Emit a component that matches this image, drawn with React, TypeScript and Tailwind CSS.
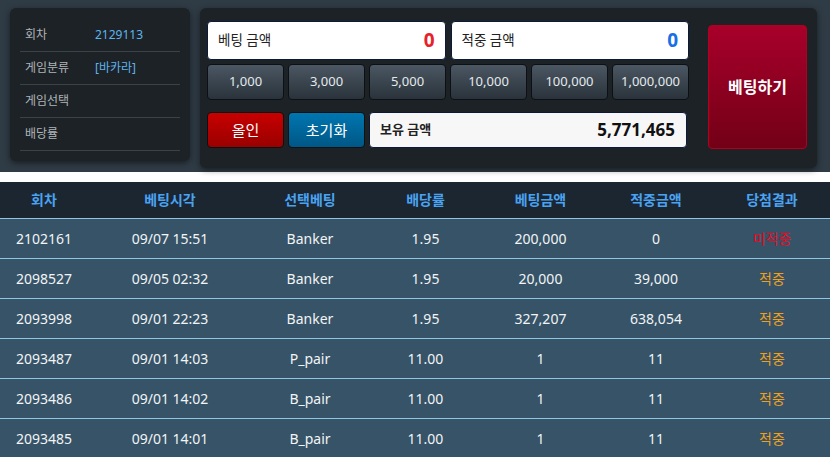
import React from 'react'

// Baccarat betting panel + bet history table

const FONT = { fontFamily: '"Noto Sans", "Noto Sans CJK KR", sans-serif' }

const info = [
  { label: '회차', value: '2129113' },
  { label: '게임분류', value: '[바카라]' },
  { label: '게임선택', value: '' },
  { label: '배당률', value: '' },
]

const chips = ['1,000', '3,000', '5,000', '10,000', '100,000', '1,000,000']

type Row = {
  round: string
  time: string
  pick: string
  odds: string
  bet: string
  win: string
  result: '적중' | '미적중'
}

const rows: Row[] = [
  { round: '2102161', time: '09/07 15:51', pick: 'Banker', odds: '1.95', bet: '200,000', win: '0', result: '미적중' },
  { round: '2098527', time: '09/05 02:32', pick: 'Banker', odds: '1.95', bet: '20,000', win: '39,000', result: '적중' },
  { round: '2093998', time: '09/01 22:23', pick: 'Banker', odds: '1.95', bet: '327,207', win: '638,054', result: '적중' },
  { round: '2093487', time: '09/01 14:03', pick: 'P_pair', odds: '11.00', bet: '1', win: '11', result: '적중' },
  { round: '2093486', time: '09/01 14:02', pick: 'B_pair', odds: '11.00', bet: '1', win: '11', result: '적중' },
  { round: '2093485', time: '09/01 14:01', pick: 'B_pair', odds: '11.00', bet: '1', win: '11', result: '적중' },
]

const headers = ['회차', '베팅시각', '선택베팅', '배당률', '베팅금액', '적중금액', '당첨결과']
const colWidths = ['w-[88px]', 'w-[164px]', 'w-[116px]', 'w-[115px]', 'w-[115px]', 'w-[116px]', 'w-[116px]']

function InfoPanel() {
  return (
    <div className="w-[180px] h-[153px] rounded-md bg-[#1d2226] shadow-[0_2px_6px_rgba(0,0,0,0.5)] px-[10px] pt-[11px]">
      {info.map((r) => (
        <div key={r.label} className="h-[33px] flex items-center border-b border-[#3b4349] pl-[5px] text-[12px]">
          <span className="w-[70px] text-[#aeb4b8]">{r.label}</span>
          <span className="text-[#5fb4ee]">{r.value}</span>
        </div>
      ))}
    </div>
  )
}

function AmountBox({ label, value, color }: { label: string; value: string; color: string }) {
  return (
    <div className="flex-1 h-[39px] rounded-[4px] bg-white border border-[#0b1a3a] flex items-center justify-between pl-[10px] pr-[10px]">
      <span className="text-[13.5px] text-[#222]">{label}</span>
      <span className={`text-[19px] font-bold ${color}`}>{value}</span>
    </div>
  )
}

function BetPanel() {
  return (
    <div className="w-[617px] h-[160px] rounded-md bg-[#1d2226] shadow-[0_2px_6px_rgba(0,0,0,0.5)] pl-[7px] pr-[10px] pt-[13px] flex">
      <div className="w-[482px] flex flex-col">
        <div className="flex gap-[5px]">
          <AmountBox label="베팅 금액" value="0" color="text-[#e8202a]" />
          <AmountBox label="적중 금액" value="0" color="text-[#1a6fe6]" />
        </div>
        <div className="flex gap-[4px] mt-[4px]">
          {chips.map((c) => (
            <button
              key={c}
              className="w-[77px] h-[36px] rounded-[4px] border border-[#0e1114] bg-gradient-to-b from-[#4b5763] to-[#2a333b] text-[13px] text-[#e4e9ec]"
            >
              {c}
            </button>
          ))}
        </div>
        <div className="flex gap-[4px] mt-[12px]">
          <button className="w-[77px] h-[36px] rounded-[4px] border border-[#0e1114] bg-gradient-to-b from-[#c80000] to-[#990000] text-[15px] text-white">
            올인
          </button>
          <button className="w-[77px] h-[36px] rounded-[4px] border border-[#0e1114] bg-gradient-to-b from-[#0076b0] to-[#005786] text-[15px] text-white">
            초기화
          </button>
          <div className="w-[318px] h-[36px] rounded-[4px] bg-[#f7f7f7] border border-[#0b1a3a] flex items-center justify-between pl-[10px] pr-[11px]">
            <span className="text-[13px] font-bold text-[#222]">보유 금액</span>
            <span className="text-[17px] font-bold text-[#111]">5,771,465</span>
          </div>
        </div>
      </div>
      <div className="ml-[19px] mt-[4px]">
        <button className="w-[99px] h-[124px] rounded-[4px] border border-[#b3001f] bg-gradient-to-b from-[#a8002a] to-[#730017] text-[16px] font-bold text-white">
          베팅하기
        </button>
      </div>
    </div>
  )
}

function HistoryTable() {
  return (
    <table className="w-[830px] table-fixed border-collapse text-[14px]">
      <thead>
        <tr className="bg-[#1b2630] h-[36px]">
          {headers.map((h, i) => (
            <th key={h} className={`${colWidths[i]} font-bold text-[#4aa3f2]`}>
              {h}
            </th>
          ))}
        </tr>
      </thead>
      <tbody>
        {rows.map((r) => (
          <tr key={r.round} className="h-[40px] bg-[#365368] border-t border-[#8ec7e3] text-[#f2f4f5] text-center">
            <td>{r.round}</td>
            <td>{r.time}</td>
            <td>{r.pick}</td>
            <td>{r.odds}</td>
            <td>{r.bet}</td>
            <td>{r.win}</td>
            <td className={r.result === '적중' ? 'text-[#f2a01c]' : 'text-[#ee0a22]'}>{r.result}</td>
          </tr>
        ))}
      </tbody>
    </table>
  )
}

export default function App() {
  return (
    <div className="w-[830px] h-[457px] overflow-hidden bg-white" style={FONT}>
      <div className="h-[172px] bg-[#2f3b45] flex gap-[10px] pl-[10px] pt-[8px]">
        <InfoPanel />
        <BetPanel />
      </div>
      <div className="h-[10px]" />
      <HistoryTable />
    </div>
  )
}
